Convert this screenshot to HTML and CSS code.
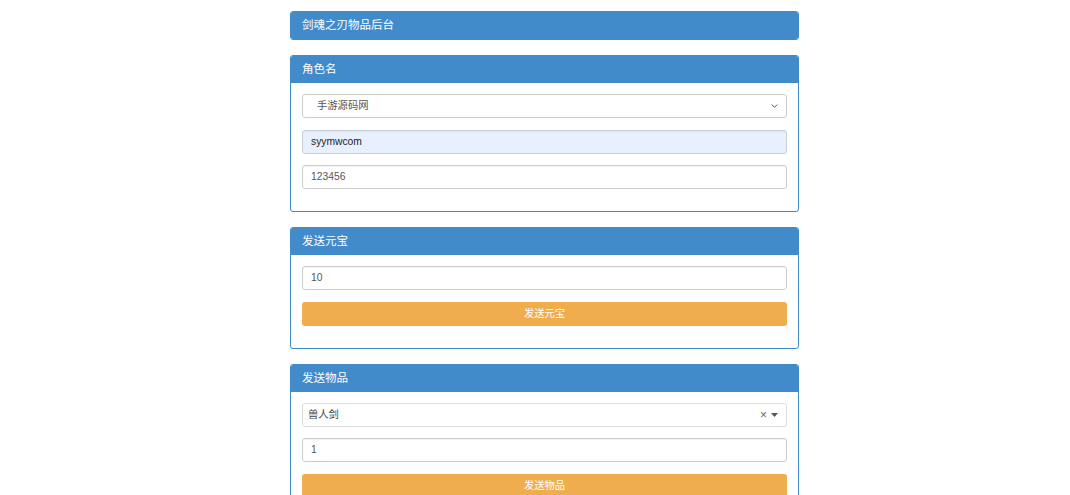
FILE: index.html
```html
<!DOCTYPE html>
<html lang="zh-CN">
<head>
<meta charset="utf-8">
<title>剑魂之刃物品后台</title>
<link rel="stylesheet" href="styles.css">
</head>
<body>
<div class="container">
  <div class="panel">
    <div class="panel-heading">剑魂之刃物品后台</div>
  </div>

  <div class="panel">
    <div class="panel-heading">角色名</div>
    <div class="panel-body">
      <div class="form-group">
        <div class="control select">
          <span class="select-text">手游源码网</span>
          <svg class="chevron" width="7" height="4" viewBox="0 0 7 4"><path d="M0.8 0.6 L3.5 3.3 L6.2 0.6" fill="none" stroke="#555" stroke-width="1"/></svg>
        </div>
      </div>
      <div class="form-group">
        <div class="control autofill">syymwcom</div>
      </div>
      <div class="form-group">
        <div class="control">123456</div>
      </div>
    </div>
  </div>

  <div class="panel">
    <div class="panel-heading">发送元宝</div>
    <div class="panel-body">
      <div class="form-group">
        <div class="control">10</div>
      </div>
      <div class="form-group">
        <div class="btn">发送元宝</div>
      </div>
    </div>
  </div>

  <div class="panel">
    <div class="panel-heading">发送物品</div>
    <div class="panel-body">
      <div class="form-group">
        <div class="control select2">
          <span class="select2-text">兽人剑</span>
          <span class="select2-clear">×</span>
          <svg class="caret" width="7" height="4" viewBox="0 0 7 4"><path d="M0 0 L7 0 L3.5 4 Z" fill="#555"/></svg>
        </div>
      </div>
      <div class="form-group">
        <div class="control">1</div>
      </div>
      <div class="form-group">
        <div class="btn">发送物品</div>
      </div>
    </div>
  </div>
</div>
</body>
</html>
```

FILE: styles.css
```css
html, body {
  margin: 0;
  padding: 0;
  background: #fff;
}
body {
  font-family: "Liberation Sans", "Noto Sans CJK SC", sans-serif;
  font-size: 10.3px;
  color: #555;
}
.container {
  width: 509px;
  margin-left: 290px;
  padding-top: 11px;
}
.panel {
  border: 1px solid #428bca;
  border-radius: 3px;
  margin-bottom: 15px;
  background: #fff;
  overflow: hidden;
}
.panel-heading {
  background: #428bca;
  color: #fff;
  height: 27px;
  line-height: 27px;
  padding: 0 11px;
  font-size: 11.5px;
}
.panel-body {
  padding: 11px 11px 11px;
}
.form-group {
  margin-bottom: 11.5px;
}
.form-group:last-child {
  margin-bottom: 11px;
}
.control {
  box-sizing: border-box;
  height: 24px;
  border: 1px solid #ccc;
  border-radius: 3px;
  padding: 0 8px;
  line-height: 22px;
  color: #555;
  background: #fff;
  box-shadow: inset 0 1px 1px rgba(0,0,0,0.06);
}
.autofill {
  background: #e8f0fe;
  color: #222;
  border-color: #c8d0dc;
}
.select {
  display: flex;
  align-items: center;
  justify-content: space-between;
  padding: 0 8px 0 14px;
  box-shadow: none;
}
.select-text {
  color: #555;
}
.chevron {
  display: block;
}
.select2 {
  display: flex;
  align-items: center;
  padding: 0 8px 0 5px;
  box-shadow: none;
  border-color: #ddd;
}
.select2-text {
  flex: 1;
  color: #444;
}
.select2-clear {
  font-size: 12px;
  color: #666;
  margin-right: 4px;
}
.caret {
  display: block;
}
.btn {
  height: 24px;
  line-height: 24px;
  text-align: center;
  background: #f0ad4e;
  color: #fff;
  border-radius: 3px;
  font-size: 10.3px;
}
```
